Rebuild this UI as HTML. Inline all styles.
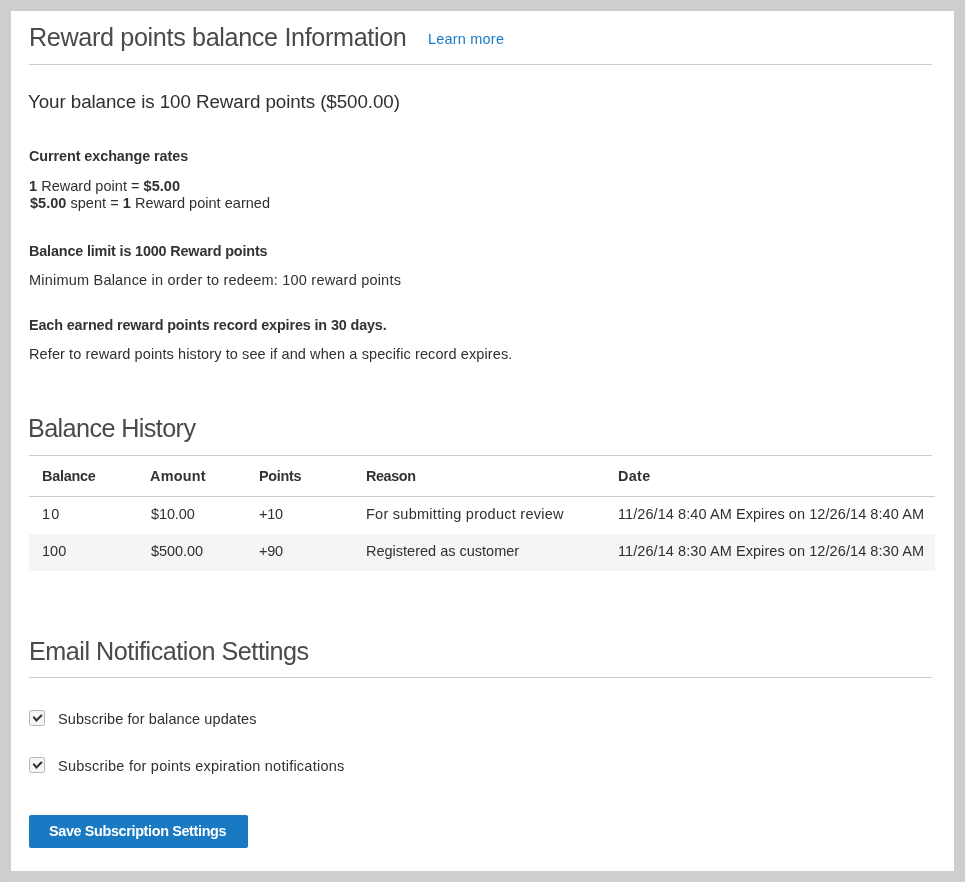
<!DOCTYPE html>
<html><head><meta charset="utf-8"><style>
html,body{margin:0;padding:0;}
body{width:965px;height:882px;background:#cfcecc;position:relative;overflow:hidden;font-family:"Liberation Sans",sans-serif;}
.panel{position:absolute;left:11px;top:11px;width:943px;height:860px;background:#ffffff;}
.tx{position:absolute;white-space:nowrap;will-change:transform;}
.hr{position:absolute;height:1px;background:#cccccc;}
.row2{position:absolute;left:29px;top:534px;width:906px;height:37px;background:#f5f5f5;}
.cb{position:absolute;left:29px;width:14px;height:14px;border:1px solid #b6b6b6;border-radius:2.5px;background:#f5f5f5;}
.cb svg{position:absolute;left:0;top:0;}
.btn{position:absolute;left:29px;top:815px;width:219px;height:33px;background:#1979c3;border-radius:2px;}
</style></head><body>
<div class="panel"></div>
<div class="hr" style="left:29px;top:64px;width:903px"></div>
<div class="hr" style="left:29px;top:455px;width:903px"></div>
<div class="hr" style="left:29px;top:496px;width:906px"></div>
<div class="row2"></div>
<div class="hr" style="left:29px;top:677px;width:903px"></div>
<div class="cb" style="top:710px"><svg width="14" height="14" viewBox="0 0 14 14"><path d="M3.9 6.4 L6.4 9.4 L11.3 4.5" fill="none" stroke="#303030" stroke-width="2.1" stroke-linecap="round" stroke-linejoin="miter"/></svg></div>
<div class="cb" style="top:757px"><svg width="14" height="14" viewBox="0 0 14 14"><path d="M3.9 6.4 L6.4 9.4 L11.3 4.5" fill="none" stroke="#303030" stroke-width="2.1" stroke-linecap="round" stroke-linejoin="miter"/></svg></div>
<div class="btn"></div>
<div style="position:absolute;left:11px;top:881px;width:954px;height:1px;background:#d6d5d3"></div>
<div id="t1" class="tx" style="left:28.50px;top:24.67px;font-size:25.2px;line-height:25.2px;font-weight:normal;color:#4a4a4a;letter-spacing:-0.356px">Reward points balance Information</div>
<div id="t2" class="tx" style="left:427.50px;top:32.03px;font-size:14.5px;line-height:14.5px;font-weight:normal;color:#1979c3;letter-spacing:0.200px">Learn more</div>
<div id="t3" class="tx" style="left:28.00px;top:92.89px;font-size:18.8px;line-height:18.8px;font-weight:normal;color:#303030;letter-spacing:-0.076px">Your balance is 100 Reward points ($500.00)</div>
<div id="t4" class="tx" style="left:28.50px;top:148.81px;font-size:14.4px;line-height:14.4px;font-weight:bold;color:#333333;letter-spacing:-0.076px">Current exchange rates</div>
<div id="t5" class="tx" style="left:28.50px;top:178.53px;font-size:14.5px;line-height:14.5px;font-weight:normal;color:#303030;letter-spacing:0.029px"><b>1</b> Reward point = <b>$5.00</b></div>
<div id="t6" class="tx" style="left:29.50px;top:195.93px;font-size:14.5px;line-height:14.5px;font-weight:normal;color:#303030;letter-spacing:0.029px"><b>$5.00</b> spent = <b>1</b> Reward point earned</div>
<div id="t7" class="tx" style="left:28.50px;top:243.61px;font-size:14.4px;line-height:14.4px;font-weight:bold;color:#333333;letter-spacing:-0.159px">Balance limit is 1000 Reward points</div>
<div id="t8" class="tx" style="left:28.50px;top:273.33px;font-size:14.5px;line-height:14.5px;font-weight:normal;color:#303030;letter-spacing:0.208px">Minimum Balance in order to redeem: 100 reward points</div>
<div id="t9" class="tx" style="left:29.00px;top:318.41px;font-size:14.4px;line-height:14.4px;font-weight:bold;color:#333333;letter-spacing:-0.137px">Each earned reward points record expires in 30 days.</div>
<div id="t10" class="tx" style="left:29.00px;top:347.13px;font-size:14.5px;line-height:14.5px;font-weight:normal;color:#303030;letter-spacing:0.104px">Refer to reward points history to see if and when a specific record expires.</div>
<div id="t11" class="tx" style="left:28.00px;top:415.87px;font-size:25.2px;line-height:25.2px;font-weight:normal;color:#4a4a4a;letter-spacing:-0.600px">Balance History</div>
<div id="h1" class="tx" style="left:42.00px;top:469.01px;font-size:14.4px;line-height:14.4px;font-weight:bold;color:#333333;letter-spacing:-0.233px">Balance</div>
<div id="h2" class="tx" style="left:150.00px;top:469.01px;font-size:14.4px;line-height:14.4px;font-weight:bold;color:#333333;letter-spacing:0.240px">Amount</div>
<div id="h3" class="tx" style="left:258.50px;top:469.01px;font-size:14.4px;line-height:14.4px;font-weight:bold;color:#333333;letter-spacing:-0.280px">Points</div>
<div id="h4" class="tx" style="left:366.00px;top:469.01px;font-size:14.4px;line-height:14.4px;font-weight:bold;color:#333333;letter-spacing:-0.400px">Reason</div>
<div id="h5" class="tx" style="left:618.00px;top:469.01px;font-size:14.4px;line-height:14.4px;font-weight:bold;color:#333333;letter-spacing:0.333px">Date</div>
<div id="r11" class="tx" style="left:42.00px;top:507.13px;font-size:14.5px;line-height:14.5px;font-weight:normal;color:#303030;letter-spacing:1.200px">10</div>
<div id="r12" class="tx" style="left:151.00px;top:507.13px;font-size:14.5px;line-height:14.5px;font-weight:normal;color:#303030;letter-spacing:-0.120px">$10.00</div>
<div id="r13" class="tx" style="left:258.50px;top:507.13px;font-size:14.5px;line-height:14.5px;font-weight:normal;color:#303030;letter-spacing:-0.300px">+10</div>
<div id="r14" class="tx" style="left:366.00px;top:507.13px;font-size:14.5px;line-height:14.5px;font-weight:normal;color:#303030;letter-spacing:0.264px">For submitting product review</div>
<div id="r15" class="tx" style="left:618.00px;top:507.13px;font-size:14.5px;line-height:14.5px;font-weight:normal;color:#303030;letter-spacing:0.074px">11/26/14 8:40 AM Expires on 12/26/14 8:40 AM</div>
<div id="r21" class="tx" style="left:42.00px;top:544.33px;font-size:14.5px;line-height:14.5px;font-weight:normal;color:#303030;letter-spacing:0.000px">100</div>
<div id="r22" class="tx" style="left:151.00px;top:544.33px;font-size:14.5px;line-height:14.5px;font-weight:normal;color:#303030;letter-spacing:-0.067px">$500.00</div>
<div id="r23" class="tx" style="left:258.50px;top:544.33px;font-size:14.5px;line-height:14.5px;font-weight:normal;color:#303030;letter-spacing:-0.300px">+90</div>
<div id="r24" class="tx" style="left:366.00px;top:544.33px;font-size:14.5px;line-height:14.5px;font-weight:normal;color:#303030;letter-spacing:-0.000px">Registered as customer</div>
<div id="r25" class="tx" style="left:618.00px;top:544.33px;font-size:14.5px;line-height:14.5px;font-weight:normal;color:#303030;letter-spacing:0.074px">11/26/14 8:30 AM Expires on 12/26/14 8:30 AM</div>
<div id="t12" class="tx" style="left:28.50px;top:638.67px;font-size:25.2px;line-height:25.2px;font-weight:normal;color:#4a4a4a;letter-spacing:-0.477px">Email Notification Settings</div>
<div id="c1" class="tx" style="left:57.50px;top:711.73px;font-size:14.5px;line-height:14.5px;font-weight:normal;color:#303030;letter-spacing:0.093px">Subscribe for balance updates</div>
<div id="c2" class="tx" style="left:57.50px;top:758.73px;font-size:14.5px;line-height:14.5px;font-weight:normal;color:#303030;letter-spacing:0.241px">Subscribe for points expiration notifications</div>
<div id="b1" class="tx" style="left:49.00px;top:824.01px;font-size:14.4px;line-height:14.4px;font-weight:bold;color:#ffffff;letter-spacing:-0.352px">Save Subscription Settings</div>
</body></html>
